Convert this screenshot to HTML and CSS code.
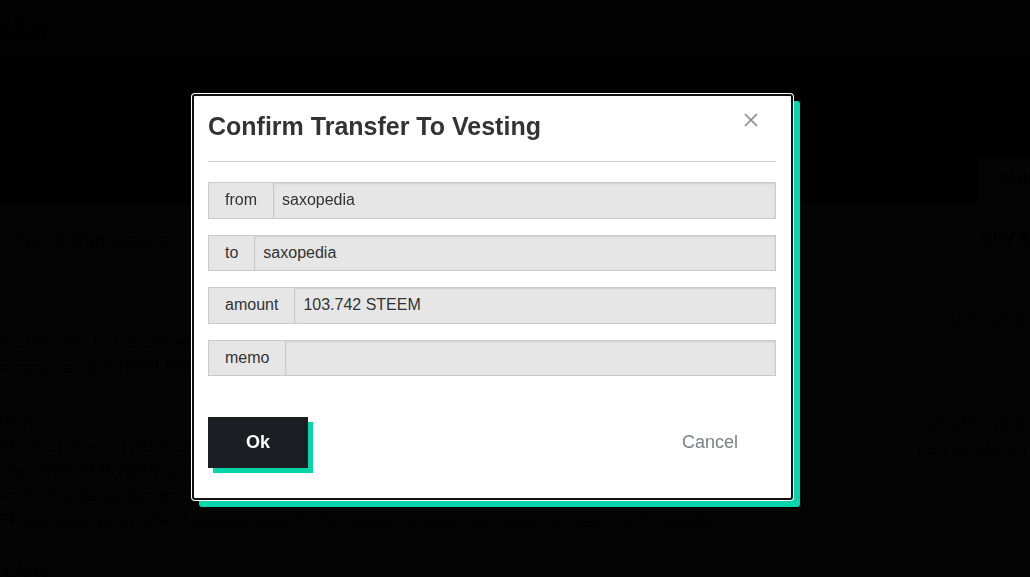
FILE: index.html
```html
<!DOCTYPE html>
<html lang="en">
<head>
<meta charset="utf-8">
<title>Confirm Transfer To Vesting</title>
<link rel="stylesheet" href="styles.css">
</head>
<body>
<div class="page">
  <header class="topbar"><span class="brand">Wallet</span></header>
  <div class="cover"></div>
  <nav class="tabs">
    <span class="tab">Rewards ▾</span>
    <span class="tab active">Wallet</span>
  </nav>
  <main class="wallet">
    <div class="subnav">
      <span class="keys">Keys &amp; Permissions</span>
      <span class="buy">BUY STEEM</span>
    </div>
    <div class="balance first">
      <div class="desc">
        <div class="head">STEEM</div>
        <p>Tradeable tokens that may be transferred anywhere at anytime.<br>STEEM can be converted to STEEM POWER in a process called powering up.</p>
      </div>
      <div class="amt">103.742 STEEM</div>
    </div>
    <div class="balance">
      <div class="desc">
        <div class="head">STEEM POWER</div>
        <p>Influence tokens which give you more control over post payouts and allow you to earn on curation rewards.<br>Part of saxopedia's STEEM POWER is currently delegated. Delegation is donated for influence.<br>Actions on Steemit. Your delegation amount can fluctuate.<br>STEEM POWER increases at an APR of approximately 3.11%, subject to blockchain variance. See FAQ for details.</p>
      </div>
      <div class="amt">14,923.576 STEEM<br>(-4,785.555 STEEM)</div>
    </div>
    <div class="balance last">
      <div class="desc"><div class="head">STEEM DOLLARS</div></div>
    </div>
  </main>
</div>

<div class="overlay">
  <div class="modal">
    <button class="close" aria-label="Close">
      <svg width="14" height="14" viewBox="0 0 14 14"><path d="M1 1 L13 13 M13 1 L1 13" stroke="#8a8a8a" stroke-width="1.7" fill="none"/></svg>
    </button>
    <h1 class="title">Confirm Transfer To Vesting</h1>
    <hr class="rule">
    <div class="group"><span class="label">from</span><input class="field" value="saxopedia" readonly></div>
    <div class="group"><span class="label">to</span><input class="field" value="saxopedia" readonly></div>
    <div class="group"><span class="label">amount</span><input class="field" value="103.742 STEEM" readonly></div>
    <div class="group"><span class="label">memo</span><input class="field" value="" readonly></div>
    <div class="actions">
      <button class="ok">Ok</button>
      <button class="cancel">Cancel</button>
    </div>
  </div>
</div>
</body>
</html>
```

FILE: styles.css
```css
html, body {
  margin: 0;
  height: 100%;
  overflow: hidden;
  background: #fff;
  font-family: "Liberation Sans", Arial, sans-serif;
  color: #333;
}

/* ---------- underlying wallet page ---------- */
.page {
  width: 1100px;
  margin-left: -20px;
}
.topbar {
  height: 58px;
  display: flex;
  align-items: center;
  background: #777;
}
.brand {
  font-size: 26px;
  margin-left: -5px;
  color: #111;
}
.cover {
  height: 99px;
  background: #222;
}
.tabs {
  height: 46px;
  background: #1a1a1a;
  display: flex;
  justify-content: space-between;
  align-items: stretch;
}
.tab {
  display: flex;
  align-items: center;
  color: #999;
  font-size: 16px;
  padding: 0 20px;
  white-space: nowrap;
}
.tab.active {
  background: #fff;
  color: #333;
  font-weight: bold;
  width: 61px;
  overflow: hidden;
}
.wallet {
  background: #fff;
  height: 400px;
}
.subnav {
  display: flex;
  justify-content: space-between;
  align-items: center;
  padding: 17px 0 0 33px;
}
.keys { font-size: 17.5px; }
.buy {
  border: 1px solid #999;
  padding: 10px 16px;
  font-weight: bold;
  font-size: 16px;
  width: 82px;
  white-space: nowrap;
  overflow: hidden;
}
.balance {
  display: flex;
  justify-content: space-between;
  margin-top: 32px;
  font-size: 16px;
}
.balance.first { margin-top: 48px; }
.balance.last { margin-top: 28px; }
.desc { margin-left: -80px; width: 900px; }
.head { font-size: 18px; margin-bottom: 2px; }
.desc p { margin: 0; line-height: 24.5px; }
.amt { text-align: right; width: 180px; padding-right: 7px; line-height: 26px; font-size: 17px; white-space: nowrap; }

/* ---------- overlay + modal ---------- */
.overlay {
  position: fixed;
  inset: 0;
  background: rgba(0, 0, 0, 0.985);
  padding: 94px 0 0 192px;
}
.modal {
  position: relative;
  box-sizing: border-box;
  width: 601px;
  background: #fff;
  border: 2px solid #111;
  border-radius: 3px;
  box-shadow: 0 0 0 1px #fff, 7px 7px 0 0 #06d6a9;
  padding: 15px 15px 30px 14px;
}
.close {
  position: absolute;
  top: 17px;
  right: 33px;
  width: 14px;
  height: 14px;
  padding: 0;
  border: 0;
  background: none;
  display: block;
  cursor: pointer;
}
.close svg { display: block; }
.title {
  margin: 0;
  font-size: 25px;
  line-height: 30px;
  font-weight: bold;
  color: #333;
}
.rule {
  margin: 20px 0 20px;
  border: 0;
  border-top: 1px solid #cacaca;
  height: 0;
}
.group {
  display: flex;
  height: 36.5px;
  margin-bottom: 16px;
}
.label {
  display: flex;
  align-items: center;
  padding: 0 16px;
  background: #e6e6e6;
  border: 1px solid #cacaca;
  border-right: 0;
  font-size: 16px;
  color: #333;
}
.field {
  flex: 1;
  min-width: 0;
  margin: 0;
  box-sizing: border-box;
  height: 100%;
  padding: 0 8px;
  background: #e6e6e6;
  border: 1px solid #cacaca;
  box-shadow: inset 0 1px 2px rgba(10, 10, 10, 0.1);
  font-family: inherit;
  font-size: 16px;
  color: #333;
  outline: none;
}
.actions {
  display: flex;
  justify-content: space-between;
  align-items: center;
  margin-top: 41px;
}
.ok {
  width: 100px;
  height: 51px;
  border: 0;
  background: #1b1f24;
  color: #fff;
  font-family: inherit;
  font-weight: bold;
  font-size: 18px;
  box-shadow: 5px 5px 0 0 #06d6a9;
  padding: 0;
}
.cancel {
  border: 0;
  background: none;
  font-family: inherit;
  font-size: 18px;
  color: #7b8085;
  padding: 0;
  margin-right: 38px;
}
```
